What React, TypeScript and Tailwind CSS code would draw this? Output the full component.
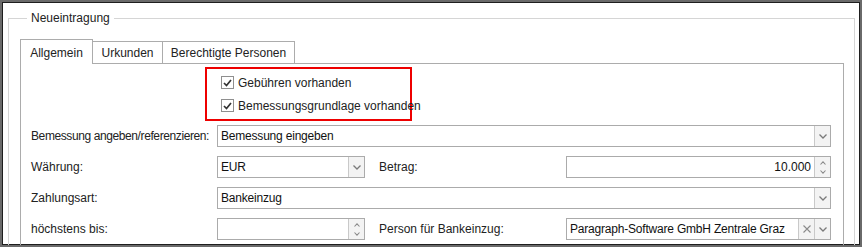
import React from 'react';

function Chevron() {
  return (
    <svg width="8" height="5" viewBox="0 0 8 5">
      <path d="M0.5 0.5 L4 4 L7.5 0.5" fill="none" stroke="#7a7a7a" strokeWidth="1.3" />
    </svg>
  );
}

function SpinArrows() {
  return (
    <div className="flex flex-col items-center gap-[5px]">
      <svg width="6" height="4" viewBox="0 0 6 4">
        <path d="M0.5 3.5 L3 0.8 L5.5 3.5" fill="none" stroke="#8a8a8a" strokeWidth="1.1" />
      </svg>
      <svg width="6" height="4" viewBox="0 0 6 4">
        <path d="M0.5 0.5 L3 3.2 L5.5 0.5" fill="none" stroke="#8a8a8a" strokeWidth="1.1" />
      </svg>
    </div>
  );
}

function Check({ label }: { label: string }) {
  return (
    <div className="flex h-[23px] items-center whitespace-nowrap">
      <div className="flex h-[13px] w-[13px] shrink-0 items-center justify-center border border-[#8f8f8f] bg-white">
        <svg width="9" height="8" viewBox="0 0 9 8">
          <path d="M1 4 L3.5 6.5 L8 1" fill="none" stroke="#333" strokeWidth="1.7" />
        </svg>
      </div>
      <span className="ml-[4px] text-[#222]">{label}</span>
    </div>
  );
}

function Select({ value, width, clear }: { value: string; width: string; clear?: boolean }) {
  return (
    <div className={`flex h-[22px] shrink-0 border border-[#ababab] bg-white ${width}`}>
      <div className="flex flex-1 items-center overflow-hidden whitespace-nowrap pl-[3px] tracking-[-0.2px] text-[#111]">{value}</div>
      {clear && (
        <div className="flex w-[16px] items-center justify-center border-l border-[#c9c9c9] bg-[#f3f3f3]">
          <svg width="8" height="8" viewBox="0 0 8 8">
            <path d="M0.5 0.5 L7.5 7.5 M7.5 0.5 L0.5 7.5" stroke="#8a8a8a" strokeWidth="1.1" />
          </svg>
        </div>
      )}
      <div className="flex w-[16px] items-center justify-center border-l border-[#c9c9c9] bg-[#f3f3f3]">
        <Chevron />
      </div>
    </div>
  );
}

function NumberInput({ value, width }: { value: string; width: string }) {
  return (
    <div className={`flex h-[22px] shrink-0 border border-[#ababab] bg-white ${width}`}>
      <div className="flex flex-1 items-center justify-end pr-[3px] text-[#111]">{value}</div>
      <div className="flex w-[16px] items-center justify-center border-l border-[#c9c9c9] bg-[#f3f3f3]">
        <SpinArrows />
      </div>
    </div>
  );
}

export default function App() {
  return (
    <div className="h-[247px] w-[862px] overflow-hidden border-2 border-[#6a6a6a] bg-white font-['Liberation_Sans',Arial,sans-serif] text-[12px] text-[#222] shadow-[inset_0_0_0_1px_#1e1e1e]">
      <fieldset className="ml-[6px] mr-[5px] mt-[8px] border border-[#d5d5d5] pl-[11px] pr-[10px] pt-[13px]">
        <legend className="ml-[7px] px-[4px] leading-[16px] text-[#222]">Neueintragung</legend>

        {/* Reiter */}
        <div className="flex items-end whitespace-nowrap">
          <div className="relative z-10 -mb-px flex h-[25px] w-[73px] items-center justify-center border border-b-0 border-[#acacac] bg-white pt-[2px]">
            Allgemein
          </div>
          <div className="flex h-[22px] w-[70px] items-center justify-center border-r border-t border-[#acacac] bg-white">
            Urkunden
          </div>
          <div className="flex h-[22px] w-[132px] items-center justify-center border-r border-t border-[#acacac] bg-white">
            Berechtigte Personen
          </div>
        </div>

        <div className="h-[200px] border border-[#acacac] px-[10px] pt-[2px]">
          <div className="ml-[174px] mt-px w-[207px] border-2 border-[#ee0000] py-[2px] pl-[14px]">
            <Check label="Gebühren vorhanden" />
            <Check label="Bemessungsgrundlage vorhanden" />
          </div>

          <div className="mt-[4px] flex flex-col gap-[9px] whitespace-nowrap">
            <div className="flex items-center">
              <div className="w-[186px] shrink-0 tracking-[-0.4px]">Bemessung angeben/referenzieren:</div>
              <Select value="Bemessung eingeben" width="w-[614px]" />
            </div>
            <div className="flex items-center">
              <div className="w-[186px] shrink-0">Währung:</div>
              <Select value="EUR" width="w-[148px]" />
              <div className="w-[201px] shrink-0 pl-[14px]">Betrag:</div>
              <NumberInput value="10.000" width="w-[265px]" />
            </div>
            <div className="flex items-center">
              <div className="w-[186px] shrink-0">Zahlungsart:</div>
              <Select value="Bankeinzug" width="w-[614px]" />
            </div>
            <div className="flex items-center">
              <div className="w-[186px] shrink-0">höchstens bis:</div>
              <NumberInput value="" width="w-[148px]" />
              <div className="w-[201px] shrink-0 pl-[14px]">Person für Bankeinzug:</div>
              <Select value="Paragraph-Software GmbH Zentrale Graz" width="w-[265px]" clear />
            </div>
          </div>
        </div>
      </fieldset>
    </div>
  );
}
